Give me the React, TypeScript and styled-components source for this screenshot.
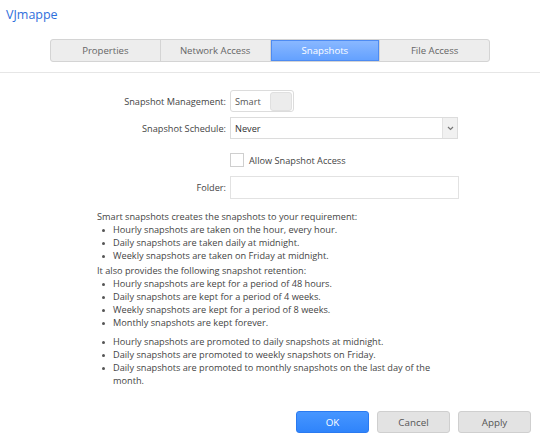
import React, { useState } from 'react';
import styled, { createGlobalStyle } from 'styled-components';

const GlobalStyle = createGlobalStyle`
    html, body {
        margin: 0;
        padding: 0;
        background: #ffffff;
    }
    body {
        font-family: 'Open Sans', 'Noto Sans', sans-serif;
        color: #444;
    }
`;

const TABS = ['Properties', 'Network Access', 'Snapshots', 'File Access'];

const Page = styled.div`
    width: 540px;
    height: 440px;
    display: flex;
    flex-direction: column;
    box-sizing: border-box;
`;

const Header = styled.div`
    padding: 7px 6px 0;
    height: 39px;
    box-sizing: border-box;
`;

const Title = styled.div`
    font-size: 12.5px;
    line-height: 16px;
    color: #2f6fdc;
`;

const TabBar = styled.div`
    display: flex;
    justify-content: center;
    padding-bottom: 10px;
    border-bottom: 1px solid #e6e6e6;
`;

const TabGroup = styled.div`
    display: flex;
    width: 440px;
    height: 23px;
    box-sizing: border-box;
    border: 1px solid #d4d4d4;
    border-radius: 3px;
    background: #ededed;
    overflow: hidden;
`;

const Tab = styled.div<{ $active?: boolean }>`
    flex: 1;
    display: flex;
    align-items: center;
    justify-content: center;
    font-size: 9.6px;
    color: ${(p) => (p.$active ? '#ffffff' : '#666')};
    background: ${(p) => (p.$active ? 'linear-gradient(#8bb9ff, #62a0ff)' : 'transparent')};
    box-shadow: ${(p) => (p.$active ? 'inset 0 0 0 1px #4d8bf2' : 'none')};
    & + & {
        border-left: 1px solid #d4d4d4;
    }
`;

const Form = styled.div`
    display: grid;
    grid-template-columns: 130px 229px;
    column-gap: 4px;
    padding: 17px 0 0 96px;
    align-items: center;
    font-size: 9.2px;
    color: #444;
`;

const Label = styled.div<{ $top?: number }>`
    margin-top: ${(p) => p.$top ?? 0}px;
    text-align: right;
    white-space: nowrap;
`;

const FieldRow = styled.div<{ $top?: number }>`
    margin-top: ${(p) => p.$top ?? 0}px;
    display: flex;
    align-items: center;
`;

const Toggle = styled.div`
    width: 64px;
    height: 22px;
    box-sizing: border-box;
    border: 1px solid #dcdcdc;
    border-radius: 3px;
    display: flex;
    align-items: center;
    justify-content: space-between;
    padding: 0 1px 0 4px;
    color: #555;
`;

const Knob = styled.div`
    width: 22px;
    height: 19px;
    box-sizing: border-box;
    background: #ececec;
    border: 1px solid #e0e0e0;
    border-radius: 3px;
`;

const Select = styled.div`
    width: 228px;
    height: 22px;
    box-sizing: border-box;
    border: 1px solid #dcdcdc;
    display: flex;
    align-items: stretch;
`;

const SelectValue = styled.div`
    flex: 1;
    display: flex;
    align-items: center;
    padding-left: 4px;
    color: #333;
`;

const SelectArrow = styled.div`
    width: 14px;
    background: #f1f1f1;
    border-left: 1px solid #e2e2e2;
    display: flex;
    align-items: center;
    justify-content: center;
`;

const Checkbox = styled.div`
    width: 14px;
    height: 14px;
    box-sizing: border-box;
    border: 1px solid #cfcfcf;
    background: #fff;
`;

const CheckLabel = styled.span`
    margin-left: 5px;
    color: #444;
`;

const TextInput = styled.input`
    width: 229px;
    height: 23px;
    box-sizing: border-box;
    border: 1px solid #e2e2e2;
    outline: none;
    padding: 0 4px;
    font: inherit;
`;

const Info = styled.div`
    padding: 11px 0 0 97px;
    width: 343px;
    font-size: 9.2px;
    line-height: 13px;
    color: #454545;
`;

const Para = styled.div<{ $gap?: number }>`
    margin-top: ${(p) => p.$gap ?? 0}px;
`;

const Bullets = styled.ul<{ $gap?: number }>`
    margin: ${(p) => p.$gap ?? 0}px 0 0;
    padding: 0 0 0 16px;
    list-style: none;
    & li {
        position: relative;
    }
    & li::before {
        content: '';
        position: absolute;
        left: -11px;
        top: 5.5px;
        width: 3px;
        height: 3px;
        border-radius: 50%;
        background: #555;
    }
`;

const Footer = styled.div`
    margin-top: auto;
    display: flex;
    justify-content: flex-end;
    gap: 8px;
    padding: 0 9px 7px 0;
`;

const Button = styled.button<{ $primary?: boolean }>`
    width: 73px;
    height: 22px;
    box-sizing: border-box;
    border-radius: 3px;
    font-family: inherit;
    font-size: 9.8px;
    border: 1px solid ${(p) => (p.$primary ? '#2a7af0' : '#cfcfcf')};
    background: ${(p) => (p.$primary ? 'linear-gradient(#4796ff, #2f84fb)' : '#e3e3e3')};
    color: ${(p) => (p.$primary ? '#ffffff' : '#555')};
    padding: 0;
`;

const Chevron = () => (
    <svg width="7" height="5" viewBox="0 0 7 5">
        <path d="M1 1 L3.5 3.5 L6 1" fill="none" stroke="#777" strokeWidth="1.2" />
    </svg>
);

const App = () => {
    const [active] = useState(2);

    return (
        <Page>
            <GlobalStyle />
            <Header>
                <Title>VJmappe</Title>
            </Header>
            <TabBar>
                <TabGroup>
                    {TABS.map((t, i) => (
                        <Tab key={t} $active={i === active}>
                            {t}
                        </Tab>
                    ))}
                </TabGroup>
            </TabBar>

            <Form>
                <Label>Snapshot Management:</Label>
                <FieldRow>
                    <Toggle>
                        Smart
                        <Knob />
                    </Toggle>
                </FieldRow>

                <Label $top={5}>Snapshot Schedule:</Label>
                <FieldRow $top={5}>
                    <Select>
                        <SelectValue>Never</SelectValue>
                        <SelectArrow>
                            <Chevron />
                        </SelectArrow>
                    </Select>
                </FieldRow>

                <div />
                <FieldRow $top={14}>
                    <Checkbox />
                    <CheckLabel>Allow Snapshot Access</CheckLabel>
                </FieldRow>

                <Label $top={9}>Folder:</Label>
                <FieldRow $top={9}>
                    <TextInput />
                </FieldRow>
            </Form>

            <Info>
                <Para>Smart snapshots creates the snapshots to your requirement:</Para>
                <Bullets>
                    <li>Hourly snapshots are taken on the hour, every hour.</li>
                    <li>Daily snapshots are taken daily at midnight.</li>
                    <li>Weekly snapshots are taken on Friday at midnight.</li>
                </Bullets>
                <Para $gap={2}>It also provides the following snapshot retention:</Para>
                <Bullets>
                    <li>Hourly snapshots are kept for a period of 48 hours.</li>
                    <li>Daily snapshots are kept for a period of 4 weeks.</li>
                    <li>Weekly snapshots are kept for a period of 8 weeks.</li>
                    <li>Monthly snapshots are kept forever.</li>
                </Bullets>
                <Bullets $gap={6}>
                    <li>Hourly snapshots are promoted to daily snapshots at midnight.</li>
                    <li>Daily snapshots are promoted to weekly snapshots on Friday.</li>
                    <li>Daily snapshots are promoted to monthly snapshots on the last day of the month.</li>
                </Bullets>
            </Info>

            <Footer>
                <Button $primary>OK</Button>
                <Button>Cancel</Button>
                <Button>Apply</Button>
            </Footer>
        </Page>
    );
};

export default App;
